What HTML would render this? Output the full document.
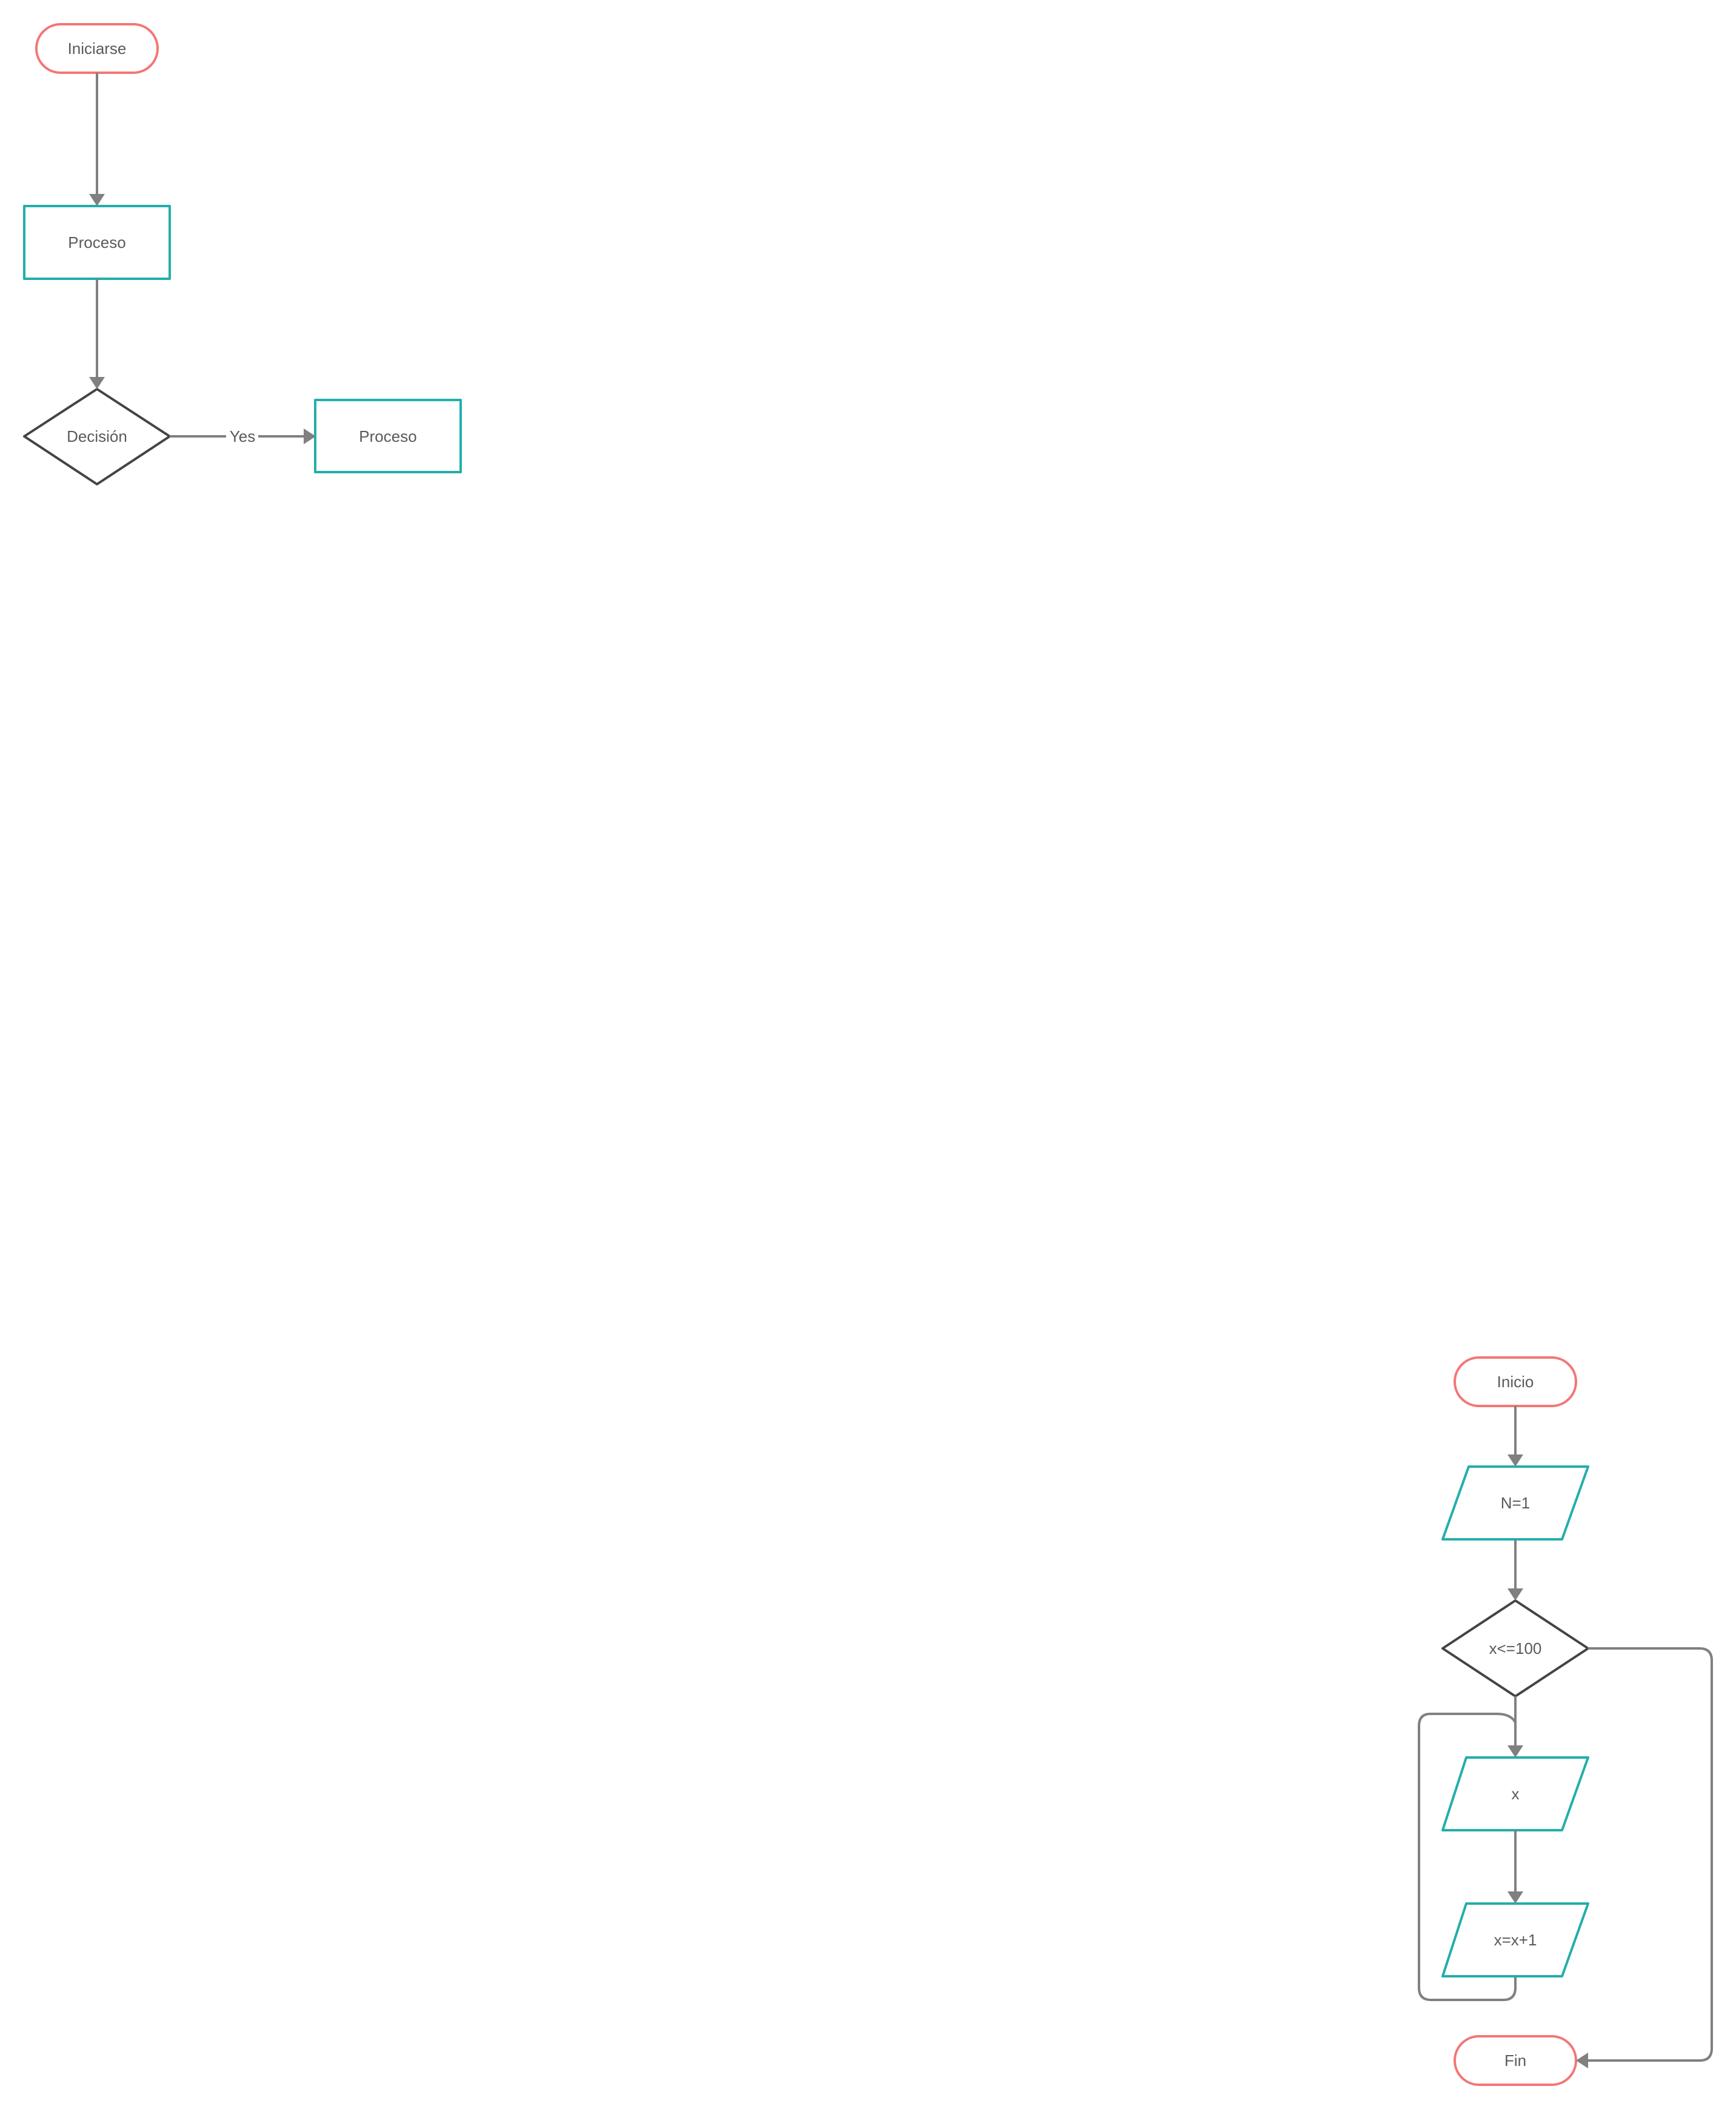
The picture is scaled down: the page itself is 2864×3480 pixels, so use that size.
<!DOCTYPE html>
<html><head><meta charset="utf-8"><style>
html,body{margin:0;padding:0;background:#fff;}
svg{display:block;}
text{font-family:"Liberation Sans",sans-serif;font-size:26px;fill:#5a5a5a;text-anchor:middle;dominant-baseline:central;}
</style></head><body>
<svg width="2864" height="3480" viewBox="0 0 2864 3480" xmlns="http://www.w3.org/2000/svg">
<defs>
<marker id="ah" markerWidth="8" markerHeight="8" refX="7" refY="4" orient="auto" markerUnits="userSpaceOnUse" viewBox="0 0 8 8"></marker>
</defs>
<g fill="none" stroke-width="4" stroke-linejoin="round">
<!-- LEFT DIAGRAM -->
<rect x="60" y="40" width="200" height="80" rx="40" stroke="#f47676"/>
<line x1="160" y1="120" x2="160" y2="322" stroke="#808080"/>
<rect x="40" y="340" width="240" height="120" stroke="#22aeab"/>
<line x1="160" y1="460" x2="160" y2="624" stroke="#808080"/>
<polygon points="160,642 280,720 160,799 40,720" stroke="#444"/>
<line x1="280" y1="720" x2="373" y2="720" stroke="#808080"/>
<line x1="426" y1="720" x2="503" y2="720" stroke="#808080"/>
<rect x="520" y="660" width="240" height="119" stroke="#22aeab"/>

<!-- RIGHT DIAGRAM -->
<rect x="2400" y="2240" width="200" height="80" rx="40" stroke="#f47676"/>
<line x1="2500" y1="2320" x2="2500" y2="2402" stroke="#808080"/>
<polygon points="2423,2420 2620,2420 2577,2540 2380,2540" stroke="#22aeab"/>
<line x1="2500" y1="2540" x2="2500" y2="2623" stroke="#808080"/>
<polygon points="2500,2641 2620,2720 2500,2799 2380,2720" stroke="#444"/>
<line x1="2500" y1="2799" x2="2500" y2="2882" stroke="#808080"/>
<path d="M2620,2720 H2804 Q2824,2720 2824,2740 V3380 Q2824,3400 2804,3400 H2618" stroke="#808080"/>
<path d="M2500,2842 Q2492,2828 2470,2828 H2360 Q2341,2828 2341,2848 V3280 Q2341,3300 2361,3300 H2480 Q2500,3300 2500,3280 V3261" stroke="#808080"/>
<polygon points="2419,2900 2620,2900 2577,3020 2380,3020" stroke="#22aeab"/>
<line x1="2500" y1="3020" x2="2500" y2="3123" stroke="#808080"/>
<polygon points="2419,3141 2620,3141 2577,3261 2380,3261" stroke="#22aeab"/>
<rect x="2400" y="3360" width="200" height="80" rx="40" stroke="#f47676"/>
</g>
<g fill="#808080">
<polygon points="147,320 173,320 160,340"/>
<polygon points="147,622 173,622 160,642"/>
<polygon points="501,707 501,733 521,720"/>
<polygon points="2487,2400 2513,2400 2500,2420"/>
<polygon points="2487,2621 2513,2621 2500,2641"/>
<polygon points="2487,2880 2513,2880 2500,2900"/>
<polygon points="2487,3121 2513,3121 2500,3141"/>
<polygon points="2620,3387 2620,3413 2600,3400"/>
</g>
<text x="160" y="80">Iniciarse</text>
<text x="160" y="400">Proceso</text>
<text x="160" y="720">Decisión</text>
<text x="400" y="720">Yes</text>
<text x="640" y="720">Proceso</text>
<text x="2500" y="2280">Inicio</text>
<text x="2500" y="2480">N=1</text>
<text x="2500" y="2720">x&lt;=100</text>
<text x="2500" y="2960">x</text>
<text x="2500" y="3201">x=x+1</text>
<text x="2500" y="3400">Fin</text>
</svg>
</body></html>
